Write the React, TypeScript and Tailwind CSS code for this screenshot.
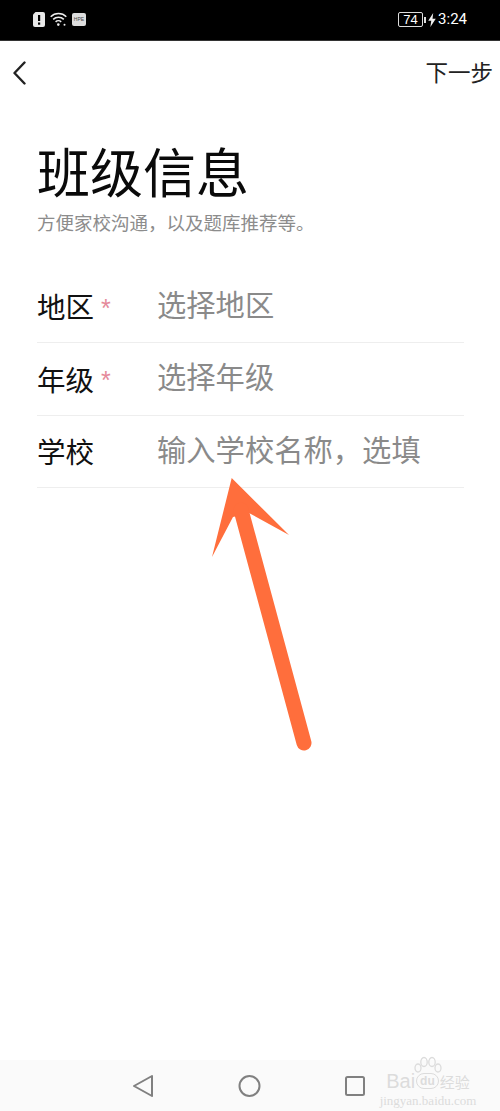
const cjk = "font-['Noto_Sans_CJK_SC','Noto_Sans',sans-serif]";

function Row({ label, hint, required }: { label: string; hint: string; required?: boolean }) {
  return (
    <div className="flex h-[72.5px] items-center border-b border-[#eeeeee]">
      <div className="flex w-[120px] items-center">
        <span className="text-[28.5px] leading-none text-[#111111]">{label}</span>
        {required && <span className="ml-[7px] mt-1 font-['Liberation_Sans'] text-[25px] leading-none text-[#e58a9a]">*</span>}
      </div>
      <span className="-mt-1.5 text-[29.3px] leading-none text-[#8a8a8a]">{hint}</span>
    </div>
  );
}

export default function App() {
  return (
    <div className={`relative flex h-[1111px] w-[500px] flex-col overflow-hidden bg-white ${cjk}`}>
      {/* status bar */}
      <div className="flex h-[41px] shrink-0 items-center justify-between border-b border-[#333333] bg-black pb-px pl-[33px] pr-[33px] text-white">
        <div className="flex items-center gap-[5px]">
          <svg width="12" height="15" viewBox="0 0 12 15">
            <path d="M0 2.5 2.5 0H10a2 2 0 0 1 2 2v11a2 2 0 0 1-2 2H2a2 2 0 0 1-2-2z" fill="#e8e8e8" />
            <rect x="5" y="3" width="2.2" height="6" fill="#000" />
            <rect x="5" y="10.5" width="2.2" height="2.2" fill="#000" />
          </svg>
          <svg width="17" height="15" viewBox="0 0 17 15" fill="none" stroke="#eeeeee" strokeWidth="1.5">
            <path d="M.7 4.8a11 11 0 0 1 15.6 0" />
            <path d="M3.2 7.4a7.5 7.5 0 0 1 10.6 0" />
            <path d="M5.6 9.9a4 4 0 0 1 5.6 0" />
            <circle cx="8.3" cy="12.6" r="1.3" fill="#eeeeee" stroke="none" />
            <circle cx="14.5" cy="12.8" r="1" fill="#eeeeee" stroke="none" />
          </svg>
          <div className="flex h-[13px] w-[14px] items-center justify-center rounded-[2px] bg-[#dddddd] font-['Liberation_Sans'] text-[5px] leading-none text-[#444444]">
            HPE
          </div>
        </div>
        <div className="flex items-center font-['Liberation_Sans'] text-white">
          <div className="flex h-[15px] w-[25px] items-center justify-center rounded-[2px] border border-[#dddddd] text-[13px] leading-none">
            74
          </div>
          <div className="ml-px h-[6px] w-[2px] bg-[#dddddd]" />
          <svg className="ml-[2px]" width="8" height="14" viewBox="0 0 7 13">
            <path d="M4.6 0 0 7.2h2.8L2 13l5-7.6H4z" fill="#eeeeee" />
          </svg>
          <span className="ml-[2px] font-['Roboto'] text-[15px] leading-none">3:24</span>
        </div>
      </div>

      {/* header */}
      <div className="flex h-[64px] shrink-0 items-center justify-between pl-[13px] pr-[7px]">
        <svg width="13" height="24" viewBox="0 0 13 24" fill="none" stroke="#222222" strokeWidth="2.4" strokeLinecap="round" strokeLinejoin="round">
          <path d="M11.5 1.5 1.5 12l10 10.5" />
        </svg>
        <span className="-mt-[4px] text-[22.5px] leading-none text-[#222222]">下一步</span>
      </div>

      {/* title */}
      <div className="pl-[38px] pr-9">
        <h1 className="-ml-px mt-[39px] text-[53px] font-normal leading-none text-[#0a0a0a]">班级信息</h1>
        <p className="-ml-px mt-[16px] text-[18.5px] leading-none text-[#8c8c8c]">{"方便家校沟通\uFF0C以及题库推荐等。"}</p>
        <div className="-ml-px mt-[39px]">
          <Row label="地区" hint="选择地区" required />
          <Row label="年级" hint="选择年级" required />
          <Row label="学校" hint={"输入学校名称\uFF0C选填"} />
        </div>
      </div>

      {/* arrow annotation */}
      <svg className="absolute left-[200px] top-[470px]" width="120" height="290" viewBox="0 0 120 290">
        <path d="M31.7 8 89 65 49 43 33 47 12 87z" fill="#ff6e3c" />
        <path d="M41 40 104 273" stroke="#ff6e3c" strokeWidth="15" strokeLinecap="round" />
      </svg>

      {/* nav bar */}
      <div className="relative mt-auto flex h-[51px] shrink-0 items-center bg-[#fafafa]">
        <svg className="ml-[132px]" width="22" height="24" viewBox="0 0 22 24" fill="none" stroke="#808080" strokeWidth="2" strokeLinejoin="round">
          <path d="M20 2 2 12l18 10z" />
        </svg>
        <svg className="ml-[84px]" width="24" height="24" viewBox="0 0 24 24" fill="none" stroke="#808080" strokeWidth="2">
          <circle cx="11.5" cy="12" r="10" />
        </svg>
        <svg className="ml-[82px]" width="22" height="22" viewBox="0 0 22 22" fill="none" stroke="#808080" strokeWidth="2">
          <rect x="2" y="2" width="18" height="18" rx="1.5" />
        </svg>

        {/* watermark */}
        <div className="absolute left-[383px] top-[-4px] flex w-[90px] flex-col items-center text-[#dcdcdc]">
          <svg className="-mb-[7px]" width="32" height="22" viewBox="0 0 32 22" fill="none" stroke="#dcdcdc" strokeWidth="1.3">
            <ellipse cx="6" cy="12" rx="3" ry="4" />
            <ellipse cx="12" cy="6" rx="3.2" ry="4.5" />
            <ellipse cx="20" cy="6" rx="3.2" ry="4.5" />
            <ellipse cx="26" cy="12" rx="3" ry="4" />
          </svg>
          <div className="flex items-center whitespace-nowrap font-['Liberation_Sans'] text-[20px] leading-none">
            <span>Bai</span>
            <span className="mx-px rounded-full border border-[#dcdcdc] px-[3px] text-[12px] font-bold leading-[14px]">du</span>
            <span className={`text-[15px] leading-none ${cjk}`}>经验</span>
          </div>
          <span className="mt-[3px] whitespace-nowrap font-['Liberation_Serif'] text-[13px] leading-none">jingyan.baidu.com</span>
        </div>
      </div>
    </div>
  );
}
